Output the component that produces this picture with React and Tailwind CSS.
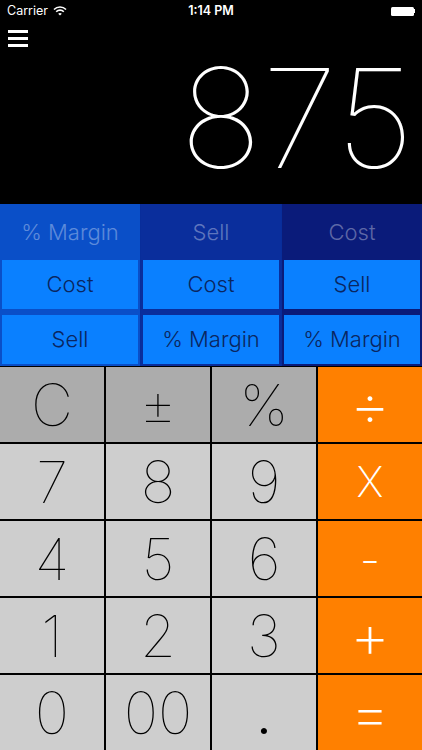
const font = { fontFamily: 'Inter, "Helvetica Neue", "Liberation Sans", sans-serif' };

const columns = [
  { head: '% Margin', bg: 'bg-[#0a4fc8]', a: 'Cost', b: 'Sell' },
  { head: 'Sell', bg: 'bg-[#0a2e9c]', a: 'Cost', b: '% Margin' },
  { head: 'Cost', bg: 'bg-[#0a1b7a]', a: 'Sell', b: '% Margin' },
];

const keys = [
  { label: 'C', kind: 'fn' },
  { label: '±', kind: 'fn' },
  { label: '%', kind: 'fn' },
  { label: '÷', kind: 'op', size: 'text-[62px]' },
  { label: '7' },
  { label: '8' },
  { label: '9' },
  { label: 'X', kind: 'op', size: 'text-[42px]' },
  { label: '4' },
  { label: '5' },
  { label: '6' },
  { label: '-', kind: 'op', size: 'text-[46px]' },
  { label: '1' },
  { label: '2' },
  { label: '3' },
  { label: '+', kind: 'op', size: 'text-[62px]' },
  { label: '0' },
  { label: '00' },
  { label: '.' },
  { label: '=', kind: 'op', size: 'text-[62px]' },
];

function StatusBar() {
  return (
    <div className="relative shrink-0 flex items-center justify-between h-[22px] px-[7px] text-white text-[12.5px]">
      <div className="flex items-center gap-[5px]">
        <span>Carrier</span>
        <svg width="14" height="10" viewBox="0 0 14 10">
          <path d="M1 3.5a8.5 8.5 0 0 1 12 0" stroke="white" strokeWidth="1.6" fill="none" />
          <path d="M3.2 5.7a5.3 5.3 0 0 1 7.6 0" stroke="white" strokeWidth="1.6" fill="none" />
          <path d="M7 9.6 5.2 7.8a2.6 2.6 0 0 1 3.6 0z" fill="white" />
        </svg>
      </div>
      <span className="absolute left-1/2 -translate-x-1/2 font-semibold">1:14 PM</span>
      <div className="flex items-center">
        <div className="w-[23px] h-[9px] bg-white rounded-[1.5px]" />
        <div className="w-[1.5px] h-[4px] bg-white" />
      </div>
    </div>
  );
}

export default function App() {
  return (
    <div className="w-[422px] h-[750px] bg-black overflow-hidden flex flex-col" style={font}>
      <StatusBar />
      <div className="h-[182px] shrink-0 relative">
        <div className="absolute left-[8px] top-[8px] flex flex-col gap-[4px]">
          <div className="w-[20px] h-[3px] bg-white" />
          <div className="w-[20px] h-[3px] bg-white" />
          <div className="w-[20px] h-[3px] bg-white" />
        </div>
        <div className="absolute right-[8px] top-[27px] text-white text-[138px] leading-none font-thin">
          875
        </div>
      </div>

      <div className="flex shrink-0 h-[162px] gap-[1px] bg-[#082d9a]">
        {columns.map((c) => (
          <div key={c.head} className={`flex-1 flex flex-col px-[2px] pb-[2px] ${c.bg}`}>
            <div className="h-[56px] flex items-center justify-center text-[22px] font-light text-white/35">
              {c.head}
            </div>
            <div className="h-[49px] bg-[#0a80ff] flex items-center justify-center text-[22px] font-light text-[#0a2660]">
              {c.a}
            </div>
            <div className="h-[6px]" />
            <div className="h-[49px] bg-[#0a80ff] flex items-center justify-center text-[22px] font-light text-[#0a2660]">
              {c.b}
            </div>
          </div>
        ))}
      </div>

      <div className="h-[384px] shrink-0 grid grid-cols-4 grid-rows-[repeat(5,minmax(0,1fr))] gap-[2px] pt-[1px] bg-black">
        {keys.map((k) => (
          <div
            key={k.label}
            className={
              k.kind === 'op'
                ? `bg-[#ff8000] text-white flex items-center justify-center leading-none font-extralight ${k.size}`
                : k.kind === 'fn'
                ? 'bg-[#acacac] text-black flex items-center justify-center leading-none text-[58px] font-thin'
                : k.label === '.'
                ? 'bg-[#cecece] text-black flex items-center justify-center leading-none text-[58px] font-light'
                : 'bg-[#cecece] text-black flex items-center justify-center leading-none text-[58px] font-thin'
            }
          >
            {k.label}
          </div>
        ))}
      </div>
    </div>
  );
}
